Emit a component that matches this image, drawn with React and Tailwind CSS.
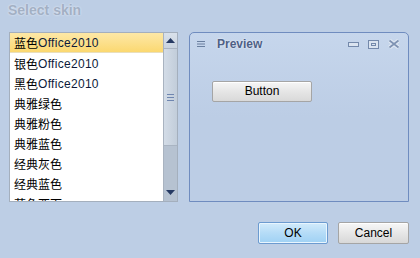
import React from 'react';

const skins = [
  ['蓝色', 'Office2010'],
  ['银色', 'Office2010'],
  ['黑色', 'Office2010'],
  ['典雅绿色', ''],
  ['典雅粉色', ''],
  ['典雅蓝色', ''],
  ['经典灰色', ''],
  ['经典蓝色', ''],
  ['草色西面', ''],
];

function SkinList() {
  return (
    <div className="flex w-[169px] h-[170px] border border-[#a4afbd] bg-white">
      <div className="w-[153px] overflow-hidden">
        {skins.map(([cn, en], i) => (
          <div
            key={i}
            className={
              i === 0
                ? 'h-[20px] pl-[4px] pt-[1px] flex items-center bg-gradient-to-b from-[#fde8a6] to-[#fbd870] border-b border-[#e9dfbd]'
                : 'h-[20px] pl-[4px] pt-[1px] flex items-center'
            }
          >
            <span className="text-[12px] text-black font-['Noto_Sans_CJK_SC',sans-serif] leading-none">{cn}</span>
            {en && <span className="text-[12px] text-[#0c1a3a] font-['Liberation_Sans',sans-serif] leading-none tracking-[0.3px]">{en}</span>}
          </div>
        ))}
      </div>
      <div className="w-[14px] flex flex-col border-l border-[#a9b3c0] bg-[#b6c2d1]">
        <div className="h-[16px] flex items-center justify-center bg-gradient-to-b from-[#d9e1eb] to-[#c9d3df] border-b border-[#aab4c2]">
          <svg width="9" height="5" viewBox="0 0 9 5"><path d="M4.5 0 L9 5 L0 5 Z" fill="#263a63" /></svg>
        </div>
        <div className="h-[97px] flex items-center justify-center bg-gradient-to-r from-[#d3dce7] to-[#c2cdda] border-b border-[#a9b4c2]">
          <svg width="7" height="7" viewBox="0 0 7 7">
            <path d="M0 0.5H7M0 3.5H7M0 6.5H7" stroke="#6f86b0" strokeWidth="1" />
          </svg>
        </div>
        <div className="flex-1 flex items-end justify-center pb-[6px]">
          <svg width="9" height="5" viewBox="0 0 9 5"><path d="M0 0 L9 0 L4.5 5 Z" fill="#263a63" /></svg>
        </div>
      </div>
    </div>
  );
}

function Preview() {
  return (
    <div className="w-[220px] h-[170px] rounded-t-[5px] border border-[#6f8cbf] bg-gradient-to-b from-[#c6d6ec] via-[#bccde5] to-[#bccde5]">
      <div className="h-[22px] flex items-center pl-[7px] pr-[8px]">
        <svg width="8" height="6" viewBox="0 0 8 6">
          <path d="M0 0.5H8M0 3H8M0 5.5H8" stroke="#6a7f9f" strokeWidth="1" />
        </svg>
        <span className="ml-[12px] text-[12px] font-bold text-[#4d6086] font-['Liberation_Sans',sans-serif] [text-shadow:0_0_2px_#ffffff]">Preview</span>
        <div className="ml-auto flex items-center gap-[9px]">
          <svg width="11" height="5" viewBox="0 0 11 5">
            <rect x="0.5" y="0.5" width="10" height="4" fill="#dbe4f0" stroke="#7489ab" />
          </svg>
          <svg width="11" height="9" viewBox="0 0 11 9">
            <rect x="0.5" y="0.5" width="10" height="8" fill="#dbe4f0" stroke="#7489ab" />
            <rect x="3.5" y="3.5" width="4" height="2" fill="none" stroke="#7489ab" />
          </svg>
          <svg width="12" height="10" viewBox="0 0 12 10">
            <path d="M1.5 1.5 L10.5 8.5 M10.5 1.5 L1.5 8.5" stroke="#e2e9f3" strokeWidth="4" />
            <path d="M1.5 1.5 L10.5 8.5 M10.5 1.5 L1.5 8.5" stroke="#7f93b3" strokeWidth="1.8" />
          </svg>
        </div>
      </div>
      <div className="pl-[22px] pt-[23px]">
        <button className="w-[100px] h-[21px] rounded-[2px] border border-[#a5a5a5] bg-gradient-to-b from-[#f6f6f6] via-[#e6e6e6] to-[#d9d9d9] text-[12px] text-black font-['Liberation_Sans',sans-serif] shadow-[inset_0_1px_0_#ffffff]">
          Button
        </button>
      </div>
    </div>
  );
}

export default function App() {
  return (
    <div className="w-[420px] h-[258px] bg-[#bdcee5] font-['Liberation_Sans',sans-serif] overflow-hidden">
      <div className="h-[32px] pl-[8px] pt-[0px] text-[14px] font-bold text-[#a3b0c4] [text-shadow:0_0_2px_#eef3fb]">
        Select skin
      </div>
      <div className="flex pl-[9px] gap-[11px]">
        <SkinList />
        <Preview />
      </div>
      <div className="flex justify-end pr-[11px] gap-[10px] pt-[20px]">
        <button className="w-[70px] h-[22px] rounded-[2px] border border-[#6c9bd0] bg-gradient-to-b from-[#d2ebfb] via-[#b5dcf7] to-[#9fd1f4] text-[12px] text-black shadow-[inset_0_0_0_1px_#e8f5fe]">
          OK
        </button>
        <button className="w-[71px] h-[22px] rounded-[2px] border border-[#a5a5a5] bg-gradient-to-b from-[#f7f7f7] via-[#e7e7e7] to-[#d8d8d8] text-[12px] text-black shadow-[inset_0_1px_0_#ffffff]">
          Cancel
        </button>
      </div>
    </div>
  );
}
